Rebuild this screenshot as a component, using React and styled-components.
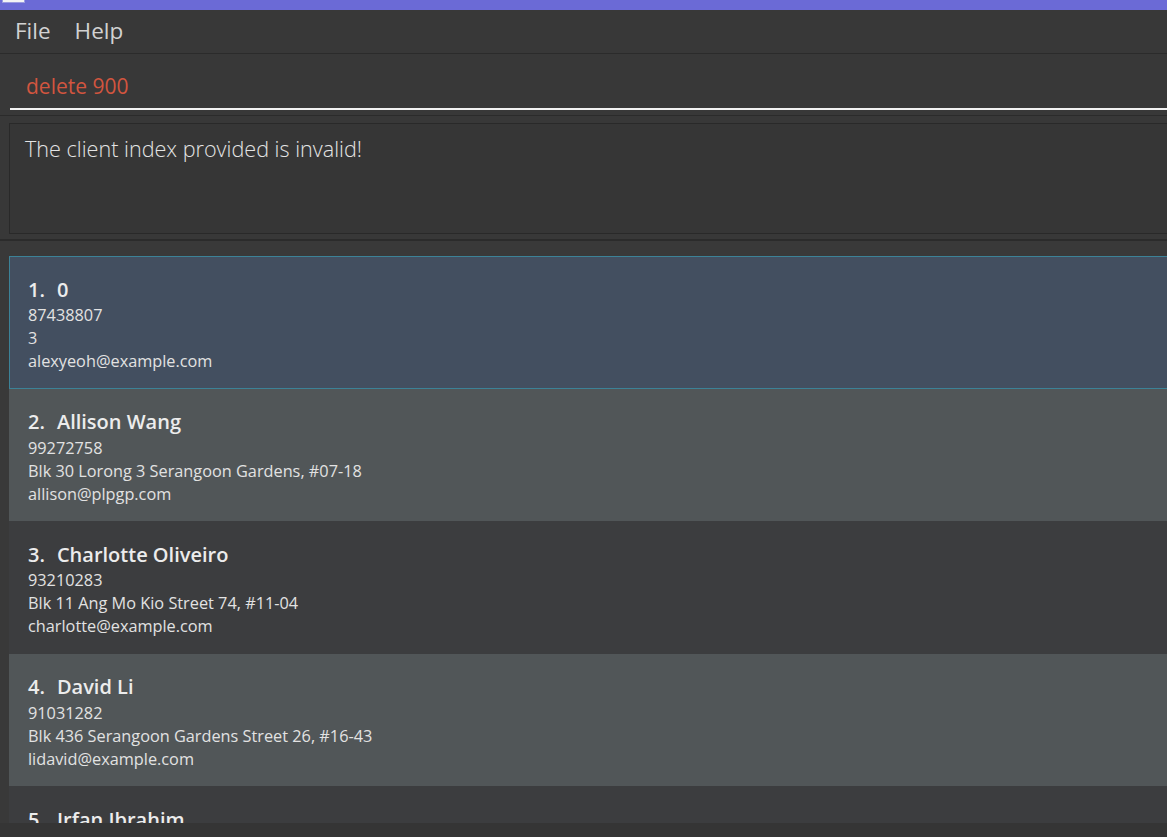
import React from 'react';
import styled, { createGlobalStyle } from 'styled-components';

const GlobalStyle = createGlobalStyle`
  html, body {
    margin: 0;
    padding: 0;
    background: #383838;
    overflow: hidden;
  }
  * { box-sizing: border-box; }
`;

const Window = styled.div`
  width: 1167px;
  height: 837px;
  display: flex;
  flex-direction: column;
  overflow: hidden;
  background: #383838;
  font-family: "Open Sans", "Segoe UI", sans-serif;
`;

const TitleStrip = styled.div`
  height: 10px;
  flex: none;
  background: #6b6ad6;
`;

const TitleIcon = styled.div`
  width: 23px;
  height: 3px;
  margin-left: 2px;
  background: #f4f4f4;
  border: 1px solid #9b9be0;
  border-top: none;
`;

const MenuBar = styled.div`
  height: 44px;
  flex: none;
  display: flex;
  align-items: center;
  gap: 24px;
  padding: 0 0 2px 15px;
  border-bottom: 1px solid #2b2b2b;
`;

const MenuItem = styled.span`
  font-size: 22.5px;
  color: #d2d2d2;
`;

const CommandArea = styled.div`
  flex: none;
  padding: 0 0 0 10px;
  height: 62px;
  border-bottom: 1px solid #2b2b2b;
`;

const CommandInput = styled.div`
  height: 56px;
  padding: 18px 0 0 16px;
  border-bottom: 2px solid #f2f2f2;
  margin-right: -20px;
  font-size: 21px;
  color: #d2553f;
`;

const ResultArea = styled.div`
  flex: none;
  padding: 7px 0 5px 9px;
  border-bottom: 2px solid #2b2b2b;
`;

const ResultBox = styled.div`
  height: 111px;
  margin-right: -20px;
  border: 1px solid #292929;
  background: #363636;
  padding: 10px 15px;
  font-size: 21.6px;
  font-weight: 300;
  color: #e4e4e4;
`;

const ListArea = styled.div`
  flex: 1;
  padding: 15px 0 0 9px;
  overflow: hidden;
  background: #393939;
`;

const List = styled.div`
  margin-right: -20px;
  height: 100%;
  overflow: hidden;
  display: flex;
  flex-direction: column;
`;

const Card = styled.div`
  flex: none;
  height: 132.5px;
  padding: ${p => (p.$selected ? '18px 18px' : '19px 19px')};
  background: ${p => (p.$selected ? '#434f60' : p.$odd ? '#515658' : '#3c3d3f')};
  border: ${p => (p.$selected ? '1px solid #3c8297' : 'none')};
  color: #e6e6e6;
`;

const NameRow = styled.div`
  display: flex;
  gap: 12px;
  height: 28px;
  margin-bottom: 1px;
  align-items: center;
  font-size: 20px;
  font-weight: 600;
  color: #ececec;
`;

const Detail = styled.div`
  font-size: 16.3px;
  line-height: 23px;
  color: #e2e2e2;
`;

const StatusBar = styled.div`
  flex: none;
  height: 14px;
  background: #353535;
`;

const clients = [
  { name: '0', phone: '87438807', address: '3', email: 'alexyeoh@example.com' },
  { name: 'Allison Wang', phone: '99272758', address: 'Blk 30 Lorong 3 Serangoon Gardens, #07-18', email: 'allison@plpgp.com' },
  { name: 'Charlotte Oliveiro', phone: '93210283', address: 'Blk 11 Ang Mo Kio Street 74, #11-04', email: 'charlotte@example.com' },
  { name: 'David Li', phone: '91031282', address: 'Blk 436 Serangoon Gardens Street 26, #16-43', email: 'lidavid@example.com' },
  { name: 'Irfan Ibrahim', phone: '92492021', address: 'Blk 47 Tampines Street 20, #17-35', email: 'irfan@example.com' },
];

export default function App() {
  return (
    <>
      <GlobalStyle />
      <Window>
        <TitleStrip>
          <TitleIcon />
        </TitleStrip>
        <MenuBar>
          <MenuItem>File</MenuItem>
          <MenuItem>Help</MenuItem>
        </MenuBar>
        <CommandArea>
          <CommandInput>delete 900</CommandInput>
        </CommandArea>
        <ResultArea>
          <ResultBox>The client index provided is invalid!</ResultBox>
        </ResultArea>
        <ListArea>
          <List>
            {clients.map((c, i) => (
              <Card key={c.name} $selected={i === 0} $odd={i % 2 === 1}>
                <NameRow>
                  <span>{i + 1}.</span>
                  <span>{c.name}</span>
                </NameRow>
                <Detail>{c.phone}</Detail>
                <Detail>{c.address}</Detail>
                <Detail>{c.email}</Detail>
              </Card>
            ))}
          </List>
        </ListArea>
        <StatusBar />
      </Window>
    </>
  );
}
